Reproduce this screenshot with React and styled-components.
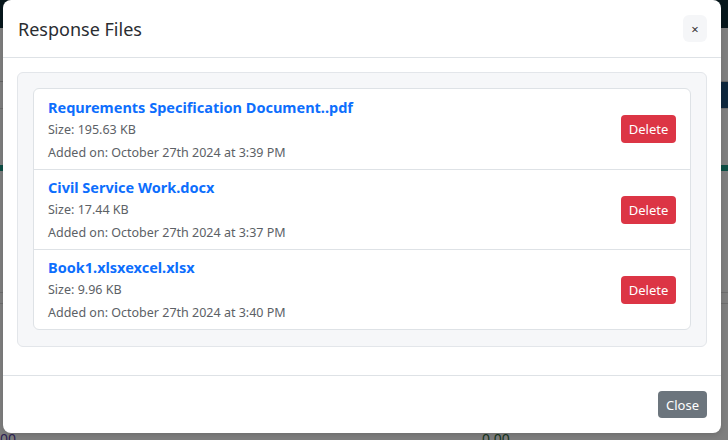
import styled, { createGlobalStyle } from "styled-components";

const GlobalStyle = createGlobalStyle`
  html, body {
    margin: 0;
    padding: 0;
    width: 728px;
    height: 440px;
    overflow: hidden;
  }
  body {
    font-family: "Noto Sans", "Open Sans", sans-serif;
  }
`;

const Page = styled.div`
  position: relative;
  width: 728px;
  height: 440px;
  background: #fff;
  display: flex;
  flex-direction: column;
`;

const NavBar = styled.div`
  height: 28px;
  background: #0f2f38;
`;

const PageBody = styled.div`
  flex: 1;
  display: flex;
  flex-direction: column;
  padding-top: 3px;
`;

const PageLine = styled.div`
  height: ${(p) => p.h}px;
  border-bottom: 1px solid ${(p) => p.color || "#ddd"};
  background: ${(p) => p.bg || "transparent"};
  display: flex;
  justify-content: space-between;
  align-items: flex-end;
`;

const PageChip = styled.div`
  width: ${(p) => p.w}px;
  height: ${(p) => p.h}px;
  background: ${(p) => p.color};
`;

const TotalsRow = styled.div`
  flex: 1;
  display: flex;
  align-items: flex-end;
  overflow: hidden;
`;

const PageNum = styled.div`
  font-size: 14px;
  line-height: 14px;
  margin-bottom: -6px;
  color: ${(p) => p.color};
  width: ${(p) => p.w}px;
`;

const Backdrop = styled.div`
  position: absolute;
  inset: 0;
  background: rgba(0, 0, 0, 0.5);
  display: flex;
  padding: 0 7px 7px 3px;
  box-sizing: border-box;
`;

const Modal = styled.div`
  width: 718px;
  height: 433px;
  background: #fff;
  border-radius: 8px;
  display: flex;
  flex-direction: column;
  box-shadow: 0 2px 6px rgba(0, 0, 0, 0.15);
`;

const Header = styled.div`
  height: 58px;
  box-sizing: border-box;
  border-bottom: 1px solid #dee2e6;
  display: flex;
  align-items: center;
  justify-content: space-between;
  padding: 0 14px 0 15px;
`;

const Title = styled.h5`
  margin: 0;
  font-size: 18px;
  font-weight: 400;
  color: #2a2d31;
`;

const XButton = styled.button`
  width: 24px;
  height: 27px;
  border: none;
  border-radius: 6px;
  background: #f5f6f8;
  color: #333;
  font-size: 13px;
  font-family: inherit;
  padding: 0;
  display: flex;
  align-items: center;
  justify-content: center;
  cursor: pointer;
`;

const Body = styled.div`
  flex: 1;
  padding: 14px 14px 27px 14px;
`;

const Panel = styled.div`
  background: #f6f7f9;
  border: 1px solid #e3e6ea;
  border-radius: 6px;
  padding: 15px 15px 16px 15px;
`;

const FileList = styled.ul`
  list-style: none;
  margin: 0;
  padding: 0;
  background: #fff;
  border: 1px solid #dee2e6;
  border-radius: 6px;
`;

const FileItem = styled.li`
  box-sizing: border-box;
  display: flex;
  align-items: center;
  justify-content: space-between;
  height: 80px;
  padding: 0 14px 0 14px;
  border-top: ${(p) => (p.first ? "none" : "1px solid #dee2e6")};
`;

const Info = styled.div`
  display: flex;
  flex-direction: column;
  padding-top: 1px;
`;

const FileName = styled.a`
  color: #0d6efd;
  font-weight: 700;
  font-size: 14.5px;
  line-height: 22px;
  text-decoration: none;
`;

const Meta = styled.div`
  color: #5c6166;
  font-size: 12.5px;
  line-height: 23px;
`;

const DeleteButton = styled.button`
  width: 55px;
  height: 28px;
  border: none;
  border-radius: 4px;
  background: #dc3545;
  color: #fff;
  font-family: inherit;
  font-size: 13px;
  padding: 0;
  cursor: pointer;
`;

const Footer = styled.div`
  height: 58px;
  box-sizing: border-box;
  border-top: 1px solid #dee2e6;
  display: flex;
  align-items: center;
  justify-content: flex-end;
  padding: 0 14px;
`;

const CloseButton = styled.button`
  width: 49px;
  height: 27px;
  border: none;
  border-radius: 4px;
  background: #6c757d;
  color: #fff;
  font-family: inherit;
  font-size: 13px;
  padding: 0;
  cursor: pointer;
`;

const files = [
  { name: "Requrements Specification Document..pdf", size: "195.63 KB", added: "October 27th 2024 at 3:39 PM" },
  { name: "Civil Service Work.docx", size: "17.44 KB", added: "October 27th 2024 at 3:37 PM" },
  { name: "Book1.xlsxexcel.xlsx", size: "9.96 KB", added: "October 27th 2024 at 3:40 PM" },
];

export default function App() {
  return (
    <>
      <GlobalStyle />
      <Page>
        <NavBar />
        <PageBody>
          <PageLine h={50} color="#ccc" />
          <PageLine h={26}>
            <span />
            <PageChip w={10} h={26} color="#1d4f7a" />
          </PageLine>
          <PageLine h={55} color="#fff" />
          <PageLine h={6} bg="#1a9c8a" color="#fff" />
          <PageLine h={120} color="#ddd" />
          <PageLine h={10} color="#ddd" />
          <TotalsRow>
            <PageNum color="#5b3fa8" w={482}>00</PageNum>
            <PageNum color="#2c6a3a" w={60}>0.00</PageNum>
          </TotalsRow>
        </PageBody>
        <Backdrop>
          <Modal>
            <Header>
              <Title>Response Files</Title>
              <XButton aria-label="Close">×</XButton>
            </Header>
            <Body>
              <Panel>
                <FileList>
                  {files.map((f, i) => (
                    <FileItem key={f.name} first={i === 0}>
                      <Info>
                        <FileName href="#">{f.name}</FileName>
                        <Meta>Size: {f.size}</Meta>
                        <Meta>Added on: {f.added}</Meta>
                      </Info>
                      <DeleteButton>Delete</DeleteButton>
                    </FileItem>
                  ))}
                </FileList>
              </Panel>
            </Body>
            <Footer>
              <CloseButton>Close</CloseButton>
            </Footer>
          </Modal>
        </Backdrop>
      </Page>
    </>
  );
}
